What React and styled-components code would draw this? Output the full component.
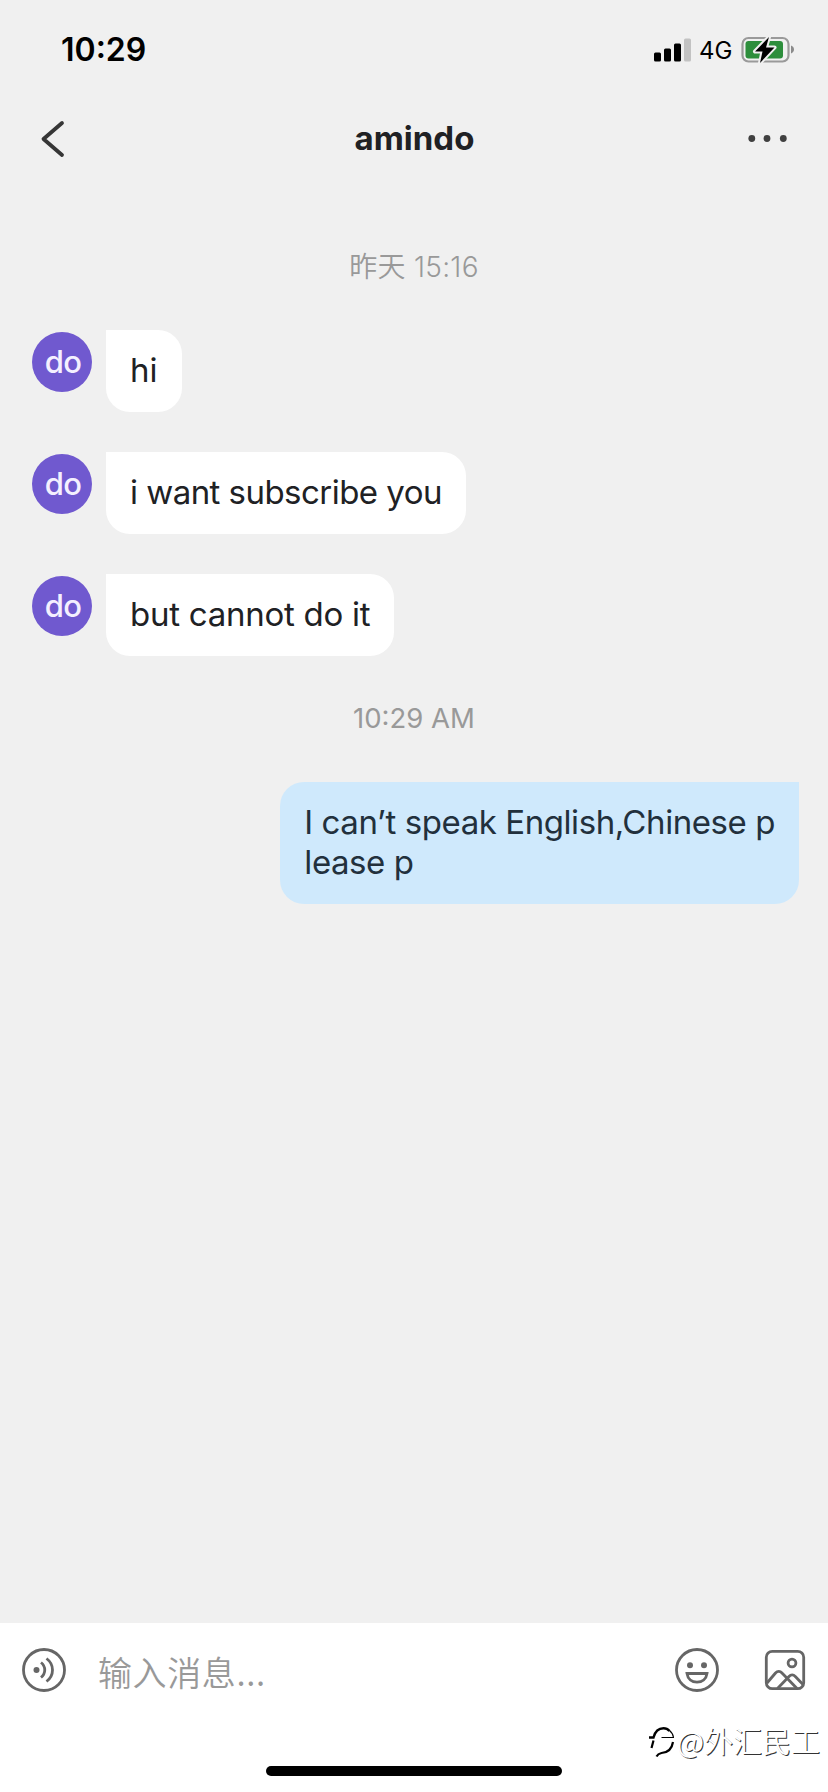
import React from "react";
import styled, { createGlobalStyle } from "styled-components";

const messages = [
  { id: 1, text: "hi", spacing: 0 },
  { id: 2, text: "i want subscribe you", spacing: -0.54 },
  { id: 3, text: "but cannot do it", spacing: -0.26 },
];

const App = () => {
  return (
    <Screen>
      <GlobalStyle />
      <StatusBar>
        <Clock>10:29</Clock>
        <StatusIcons>
          <SignalIcon />
          <Network>4G</Network>
          <BatteryIcon />
        </StatusIcons>
      </StatusBar>

      <Header>
        <BackIcon />
        <Title>amindo</Title>
        <MoreIcon />
      </Header>

      <Chat>
        <DateLabel>昨天 15:16</DateLabel>
        <Incoming>
          {messages.map((message) => (
            <Row key={message.id}>
              <Avatar>do</Avatar>
              <Bubble $spacing={message.spacing}>{message.text}</Bubble>
            </Row>
          ))}
        </Incoming>
        <TimeLabel>10:29 AM</TimeLabel>
        <Row $own>
          <Bubble $own $spacing={-0.43}>
            I can’t speak English,Chinese p<br />
            lease p
          </Bubble>
        </Row>
      </Chat>

      <Footer>
        <Composer>
          <VoiceIcon />
          <Placeholder>输入消息...</Placeholder>
          <SmileIcon />
          <PictureIcon />
        </Composer>
        <Watermark>
          <WatermarkLogo />
          <span>@外汇民工</span>
        </Watermark>
        <HomeIndicator />
      </Footer>
    </Screen>
  );
};

export default App;

const SignalIcon = () => (
  <svg width="38" height="24" viewBox="0 0 38 24">
    <rect x="0" y="14.5" width="7" height="9" rx="1.5" />
    <rect x="10" y="10.5" width="7" height="13" rx="1.5" />
    <rect x="20" y="5.5" width="7" height="18" rx="1.5" />
    <rect x="30" y="0.5" width="7" height="23" rx="1.5" fill="#c2c2c2" />
  </svg>
);

const BatteryIcon = () => (
  <svg width="54" height="28" viewBox="0 0 54 28">
    <rect x="1.5" y="2" width="46" height="23.5" rx="6" fill="none" stroke="#9a9a9a" strokeWidth="2.2" />
    <path d="M50 9.5c2 .8 3 2.2 3 4s-1 3.2-3 4z" fill="#8b8b8b" />
    <rect x="4.5" y="5" width="37.5" height="17.5" rx="3" fill="#2d8e3c" />
    <path
      d="M28 1 14 15.500h7.500L19 27 33.500 11.500h-8.500z"
      fill="#000"
      stroke="#f0f0f0"
      strokeWidth="4"
      strokeLinejoin="round"
      paintOrder="stroke"
    />
  </svg>
);

const BackIcon = () => (
  <svg width="26" height="38" viewBox="0 0 26 38" fill="none">
    <path d="M22 3 3.500 19 22 35" stroke="#363636" strokeWidth="3.8" strokeLinecap="round" strokeLinejoin="round" />
  </svg>
);

const MoreIcon = () => (
  <svg width="40" height="10" viewBox="0 0 40 10" fill="#404040">
    <circle cx="3.8" cy="4.5" r="3.4" />
    <circle cx="19" cy="4.5" r="3.4" />
    <circle cx="35.3" cy="4.5" r="3.4" />
  </svg>
);

const VoiceIcon = () => (
  <svg width="46" height="46" viewBox="0 0 46 46" fill="none" stroke="#666" strokeWidth="2.8">
    <circle cx="23" cy="23" r="20.5" />
    <circle cx="15.5" cy="23" r="3" fill="#666" stroke="none" />
    <path d="M20 15.5c5 4 5 11 0 15M25.500 11.500c8 6 8 17 0 23" />
  </svg>
);

const SmileIcon = () => (
  <svg width="46" height="46" viewBox="0 0 46 46" fill="none" stroke="#666" strokeWidth="2.8">
    <circle cx="23" cy="23" r="20.5" />
    <circle cx="16" cy="18.3" r="3" fill="#666" stroke="none" />
    <circle cx="30" cy="18.3" r="3" fill="#666" stroke="none" />
    <path d="M13 26.5h20c-.8 5.500-4.800 8.700-10 8.700s-9.200-3.200-10-8.700z" />
  </svg>
);

const PictureIcon = () => (
  <svg width="42" height="42" viewBox="0 0 42 42" fill="none" stroke="#666" strokeWidth="2.8" strokeLinejoin="round">
    <rect x="2.3" y="2.3" width="37.4" height="37.4" rx="6" />
    <circle cx="28" cy="14" r="3.9" />
    <path d="M3 34 11.500 24c2-2.200 4.500-2.200 6.500 0L33 39.500M13.500 39.500 25 27.500c2-2.100 4.300-2.100 6.300 0L39 35.500" />
  </svg>
);

const WatermarkLogo = () => (
  <svg width="28" height="34" viewBox="0 0 28 34" fill="none" stroke="#000">
    <path d="M0 14.500h4.500C6 9 9.500 5.300 14.500 5.300c2.500 0 4.500 1 6 2.700" strokeWidth="2.4" />
    <path d="M20.5 7.500c2 1.500 3.500 4 4 7" strokeWidth="1.2" />
    <path d="M12.5 14.500h12.500" strokeWidth="1" />
    <path d="M4.5 17.500 2.500 25M24 19c-1 6.500-5 10.500-11.500 11-2.500.5-4 1.500-5 3.500" strokeWidth="2.2" />
  </svg>
);

const GlobalStyle = createGlobalStyle`
  * {
    box-sizing: border-box;
  }

  body {
    margin: 0;
    background: #f0f0f0;
  }

  svg {
    display: block;
    flex-shrink: 0;
  }
`;

const Screen = styled.div`
  display: flex;
  flex-direction: column;
  width: 828px;
  height: 1792px;
  overflow: hidden;
  background: #f0f0f0;
  font-family: Inter, "Noto Sans CJK SC", sans-serif;
  color: #202124;
`;

const StatusBar = styled.div`
  display: flex;
  justify-content: space-between;
  align-items: center;
  height: 100px;
  padding: 0 33px 0 61px;
  color: #000;
`;

const Clock = styled.div`
  font-size: 32px;
  font-weight: 600;
  line-height: 40px;
`;

const StatusIcons = styled.div`
  display: flex;
  align-items: center;
`;

const Network = styled.div`
  width: 49px;
  padding: 1px 0 0 7px;
  font-size: 24px;
  line-height: 28px;
`;

const Header = styled.header`
  display: grid;
  grid-template-columns: 60px 1fr 60px;
  align-items: center;
  height: 78px;
  padding: 0 40px;

  svg:last-child {
    justify-self: end;
  }
`;

const Title = styled.h1`
  margin: 0 0 2px 1px;
  text-align: center;
  font-size: 33px;
  font-weight: 700;
  line-height: 40px;
`;

const Chat = styled.main`
  flex: 1;
  padding: 68px 29px 0 32px;
`;

const DateLabel = styled.div`
  height: 40px;
  margin-right: 3px;
  text-align: center;
  font-size: 28px;
  font-weight: 350;
  letter-spacing: 0.3px;
  line-height: 42px;
  color: #999;
`;

const TimeLabel = styled(DateLabel)`
  margin: 42px 3px 44px 0;
  font-size: 27.5px;
  font-weight: 400;
  letter-spacing: 0;
  line-height: 40px;
`;

const Incoming = styled.div`
  display: flex;
  flex-direction: column;
  gap: 40px;
  margin-top: 44px;
`;

const Row = styled.div`
  display: flex;
  gap: 14px;
  justify-content: ${(props) => (props.$own ? "flex-end" : "flex-start")};
`;

const Avatar = styled.div`
  width: 60px;
  height: 60px;
  margin-top: 2px;
  padding-left: 2px;
  border-radius: 50%;
  background: #7059cf;
  color: #f4f0ff;
  text-align: center;
  font-size: 31px;
  font-weight: 500;
  letter-spacing: -0.8px;
  line-height: 60px;
`;

const Bubble = styled.div`
  padding: 20px 24px 22px;
  border-radius: ${(props) => (props.$own ? "24px 0 24px 24px" : "0 24px 24px 24px")};
  background: ${(props) => (props.$own ? "#cfe9fc" : "#fff")};
  color: ${(props) => (props.$own ? "#22303c" : "#202124")};
  font-size: 33px;
  letter-spacing: ${(props) => props.$spacing}px;
  line-height: 40px;
  white-space: nowrap;
`;

const Footer = styled.footer`
  height: 169px;
  background: #fff;
`;

const Composer = styled.div`
  display: flex;
  align-items: center;
  height: 94px;
  padding: 0 22px 0 21px;
`;

const Placeholder = styled.div`
  flex: 1;
  padding: 4px 0 0 31px;
  font-family: "Noto Sans CJK SC", sans-serif;
  font-size: 34px;
  font-weight: 350;
  letter-spacing: 0.6px;
  line-height: 46px;
  color: #999;

  & + svg {
    margin-right: 44px;
  }
`;

const Watermark = styled.div`
  display: flex;
  align-items: center;
  justify-content: flex-end;
  height: 49px;
  padding: 0 8px 3px 0;
  font-family: "Noto Sans CJK SC", sans-serif;
  font-size: 29px;
  font-weight: 350;
  color: #fff;
  text-shadow: 1px 1px 0 #333;
`;

const HomeIndicator = styled.div`
  width: 296px;
  height: 10px;
  margin: 0 auto;
  border-radius: 5px;
  background: #000;
`;
